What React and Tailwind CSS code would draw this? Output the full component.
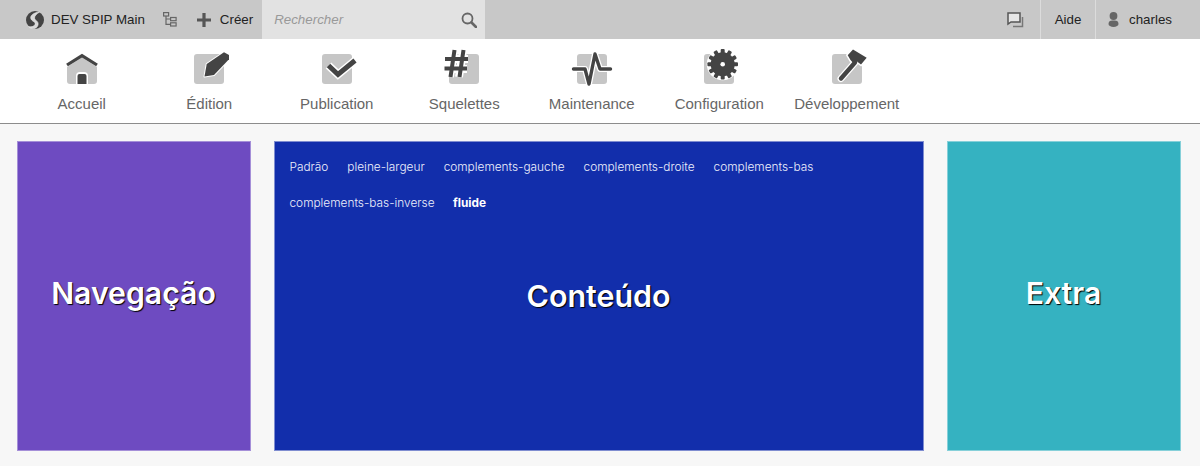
const Box = ({ children }) => (
  <svg width="48" height="40" viewBox="0 0 48 40" className="block">
    <rect x="9" y="5" width="30" height="30" rx="3" fill="#c6c6c6" />
    {children}
  </svg>
);

const halo = { stroke: "#fff", strokeWidth: 2, strokeLinejoin: "round" };

const icons = {
  home: (
    <Box>
      <path d="M9 5h30v13L24 8.5 9 18z" fill="#fff" />
      <path d="M9 16 L24 6.6 L39 16" fill="none" stroke="#444" strokeWidth="3.2" />
      <path d="M18 35 V27 a4 4 0 0 1 4 -4 h4 a4 4 0 0 1 4 4 V35 Z" fill="#fff" />
      <path d="M19.5 35 V27 a2 2 0 0 1 2 -2 h5 a2 2 0 0 1 2 2 V35 Z" fill="#444" />
    </Box>
  ),
  edit: (
    <Box>
      <path d="M19.5 27.5 L21.7 15 L39 3.3 L44 6 V10.3 L29 26 Z" fill="#444" {...halo} paintOrder="stroke" />
    </Box>
  ),
  check: (
    <Box>
      <path d="M15.5 16.5 L25 25.5 L42 11.5" fill="none" stroke="#fff" strokeWidth="8" />
      <path d="M15.5 16.5 L25 25.5 L42 11.5" fill="none" stroke="#444" strokeWidth="5" />
    </Box>
  ),
};

const gearTeeth = [0, 30, 60, 90, 120, 150, 180, 210, 240, 270, 300, 330];

const navItems = [
  ["Accueil", icons.home],
  ["Édition", icons.edit],
  ["Publication", icons.check],
  [
    "Squelettes",
    <svg width="48" height="40" viewBox="0 0 48 40" className="block">
      <rect x="9" y="5" width="30" height="30" rx="3" fill="#c6c6c6" />
      <path d="M14 2 L10 28 M23 2 L19 28 M5 10 H28 M4.5 20 H27" stroke="#fff" strokeWidth="8" fill="none" />
      <path d="M14.5 1 L10.5 28 M23.5 1 L19.5 28 M5 10 H28 M4.5 19.5 H27" stroke="#444" strokeWidth="4" fill="none" />
    </svg>,
  ],
  [
    "Maintenance",
    <svg width="48" height="40" viewBox="0 0 48 40" className="block">
      <rect x="9" y="5" width="30" height="30" rx="3" fill="#c6c6c6" />
      <path d="M5.5 20 H17 L21 35 L27 5 L32 20 H42.5" fill="none" stroke="#fff" strokeWidth="6" strokeLinejoin="round" />
      <path d="M5.5 20 H17 L21 35 L27 5 L32 20 H42.5" fill="none" stroke="#444" strokeWidth="3.4" strokeLinecap="round" strokeLinejoin="round" />
    </svg>,
  ],
  [
    "Configuration",
    <svg width="48" height="40" viewBox="0 0 48 40" className="block">
      <rect x="9" y="5" width="30" height="30" rx="3" fill="#c6c6c6" />
      <circle cx="27.7" cy="15.3" r="16" fill="#fff" />
      <g fill="#444">
        <circle cx="27.7" cy="15.3" r="12" />
        {gearTeeth.map((a) => (
          <rect key={a} x="25.7" y="0" width="4" height="5" rx="1" transform={`rotate(${a} 27.7 15.3)`} />
        ))}
      </g>
      <circle cx="27.7" cy="15.3" r="2.3" fill="#fff" />
    </svg>,
  ],
  [
    "Développement",
    <svg width="48" height="40" viewBox="0 0 48 40" className="block">
      <rect x="9" y="5" width="30" height="30" rx="3" fill="#c6c6c6" />
      <path d="M18 29.5 L32 13.5" stroke="#fff" strokeWidth="7" strokeLinecap="round" fill="none" />
      <path d="M24.7 6.3 L30 0.5 L43.7 8.7 L38 15.5 L34 12.5 L31 15 L27.5 11 Z" fill="#fff" stroke="#fff" strokeWidth="3" />
      <path d="M18 29.5 L32 13.5" stroke="#444" strokeWidth="4.4" strokeLinecap="round" fill="none" />
      <path d="M24.7 6.3 L30 0.5 L43.7 8.7 L38 15.5 L34 12.5 L31 15 L27.5 11 Z" fill="#444" />
    </svg>,
  ],
];

const row1 = ["Padrão", "pleine-largeur", "complements-gauche", "complements-droite", "complements-bas"];

export default function App() {
  return (
    <div className="h-[466px] overflow-hidden bg-[#f7f7f7] font-['Liberation_Sans',sans-serif]">
      <header className="flex h-[39px] items-center justify-between bg-[#c8c8c8] text-[13.33px] text-[#222]">
        <div className="flex h-full items-center pl-[25px]">
          <svg width="20" height="20" viewBox="0 0 20 20" className="block">
            <circle cx="10" cy="10" r="9" fill="#444" />
            <path d="M14.5 2 C9 2.5 4.5 5.5 6 9 C7.5 12 11 11.5 10 14.5 C9.5 16 7 17.5 3.5 16.5 C6 19.5 12 19.5 13 15 C14 11 9.5 10.5 9.5 8 C9.5 5.5 12 3.8 14.5 2 Z" fill="#d8d8d8" stroke="#eeeeee" strokeWidth="0.6" />
          </svg>
          <span className="ml-[6px] whitespace-nowrap">DEV SPIP Main</span>
          <svg width="14" height="15" viewBox="0 0 14 15" className="ml-[18px] block" fill="none" stroke="#666" strokeWidth="1.2">
            <rect x="0.6" y="0.6" width="5" height="3.4" />
            <rect x="7.6" y="5.5" width="5.5" height="3.2" />
            <rect x="7.6" y="10.8" width="5.5" height="3.2" />
            <path d="M3 4 V12.4 H7.6 M3 7 H7.6" />
          </svg>
          <svg width="14" height="14" viewBox="0 0 14 14" className="ml-[20px] block" fill="#555">
            <path d="M5.4 0 h3.2 v5.4 H14 v3.2 H8.6 V14 H5.4 V8.6 H0 V5.4 H5.4 Z" />
          </svg>
          <span className="ml-[9px]">Créer</span>
          <div className="ml-[9px] flex h-full w-[223px] items-center justify-between bg-[#e2e2e2] pl-[12px] pr-[8px]">
            <span className="italic text-[#999]">Rechercher</span>
            <svg width="16" height="16" viewBox="0 0 16 16" fill="none" stroke="#666" className="block">
              <circle cx="6.5" cy="6.5" r="5" strokeWidth="1.8" />
              <path d="M10.5 10.5 L15 15" strokeWidth="2.6" strokeLinecap="round" />
            </svg>
          </div>
        </div>
        <div className="flex h-full items-center">
          <div className="flex h-full w-[33px] items-center">
            <svg width="17" height="16" viewBox="0 0 17 16" fill="none" className="block">
              <path d="M1 1 H13 V10 H4 L1 12 Z" stroke="#555" strokeWidth="1.5" fill="#e6e6e6" />
              <path d="M15.5 5 V14.5 H6" stroke="#777" strokeWidth="1.5" />
            </svg>
          </div>
          <div className="flex h-full w-[55px] items-center justify-center border-l border-[#dcdcdc]">Aide</div>
          <div className="flex h-full w-[105px] items-center border-l border-[#dcdcdc] pl-[12px]">
            <svg width="11" height="15" viewBox="0 0 11 15" fill="#666" className="block">
              <circle cx="5.5" cy="4" r="3.9" />
              <path d="M0.5 12 a4 3.4 0 0 1 4 -3.4 h2 a4 3.4 0 0 1 4 3.4 a5 3 0 0 1 -10 0 Z" />
            </svg>
            <span className="ml-[10px]">charles</span>
          </div>
        </div>
      </header>

      <nav className="flex h-[85px] border-b border-[#8c8c8c] bg-white pl-[18px]">
        {navItems.map(([label, icon]) => (
          <div key={label} className="flex w-[127.5px] flex-col items-center pt-[10px]">
            {icon}
            <span className="mt-[5px] whitespace-nowrap text-[15px] leading-[20px] text-[#666]">{label}</span>
          </div>
        ))}
      </nav>

      <main className="flex pl-[17px] pt-[17px] font-['Inter',sans-serif] text-white">
        <section className="flex h-[310px] w-[234px] items-center justify-center border border-[#a58fd8] bg-[#6e4bc1] pb-[5px] pr-[1px]">
          <h2 className="text-[30.2px] font-semibold [text-shadow:1px_1px_1px_#000]">Navegação</h2>
        </section>
        <section className="ml-[23px] flex h-[310px] w-[650px] flex-col border border-[#7f8dd0] bg-[#122eab] px-[14.5px]">
          <div className="flex h-[36px] items-center gap-[19px] pt-[15px] text-[11.85px] font-light text-[#eef0fb]">
            {row1.map((t) => <span key={t}>{t}</span>)}
          </div>
          <div className="flex h-[36px] items-center gap-[18.5px] pt-[15px] text-[11.85px] font-light text-[#eef0fb]">
            <span>complements-bas-inverse</span>
            <span className="font-bold text-white">fluide</span>
          </div>
          <h2 className="mt-[60px] pr-[1px] text-center text-[30.4px] font-semibold [text-shadow:1px_1px_1px_#000]">Conteúdo</h2>
        </section>
        <section className="ml-[23px] flex h-[310px] w-[234px] items-center justify-center border border-[#86d0d9] bg-[#35b2c1] pb-[5px] pr-[1px]">
          <h2 className="text-[30.2px] font-semibold [text-shadow:1px_1px_1px_#000]">Extra</h2>
        </section>
      </main>
    </div>
  );
}
